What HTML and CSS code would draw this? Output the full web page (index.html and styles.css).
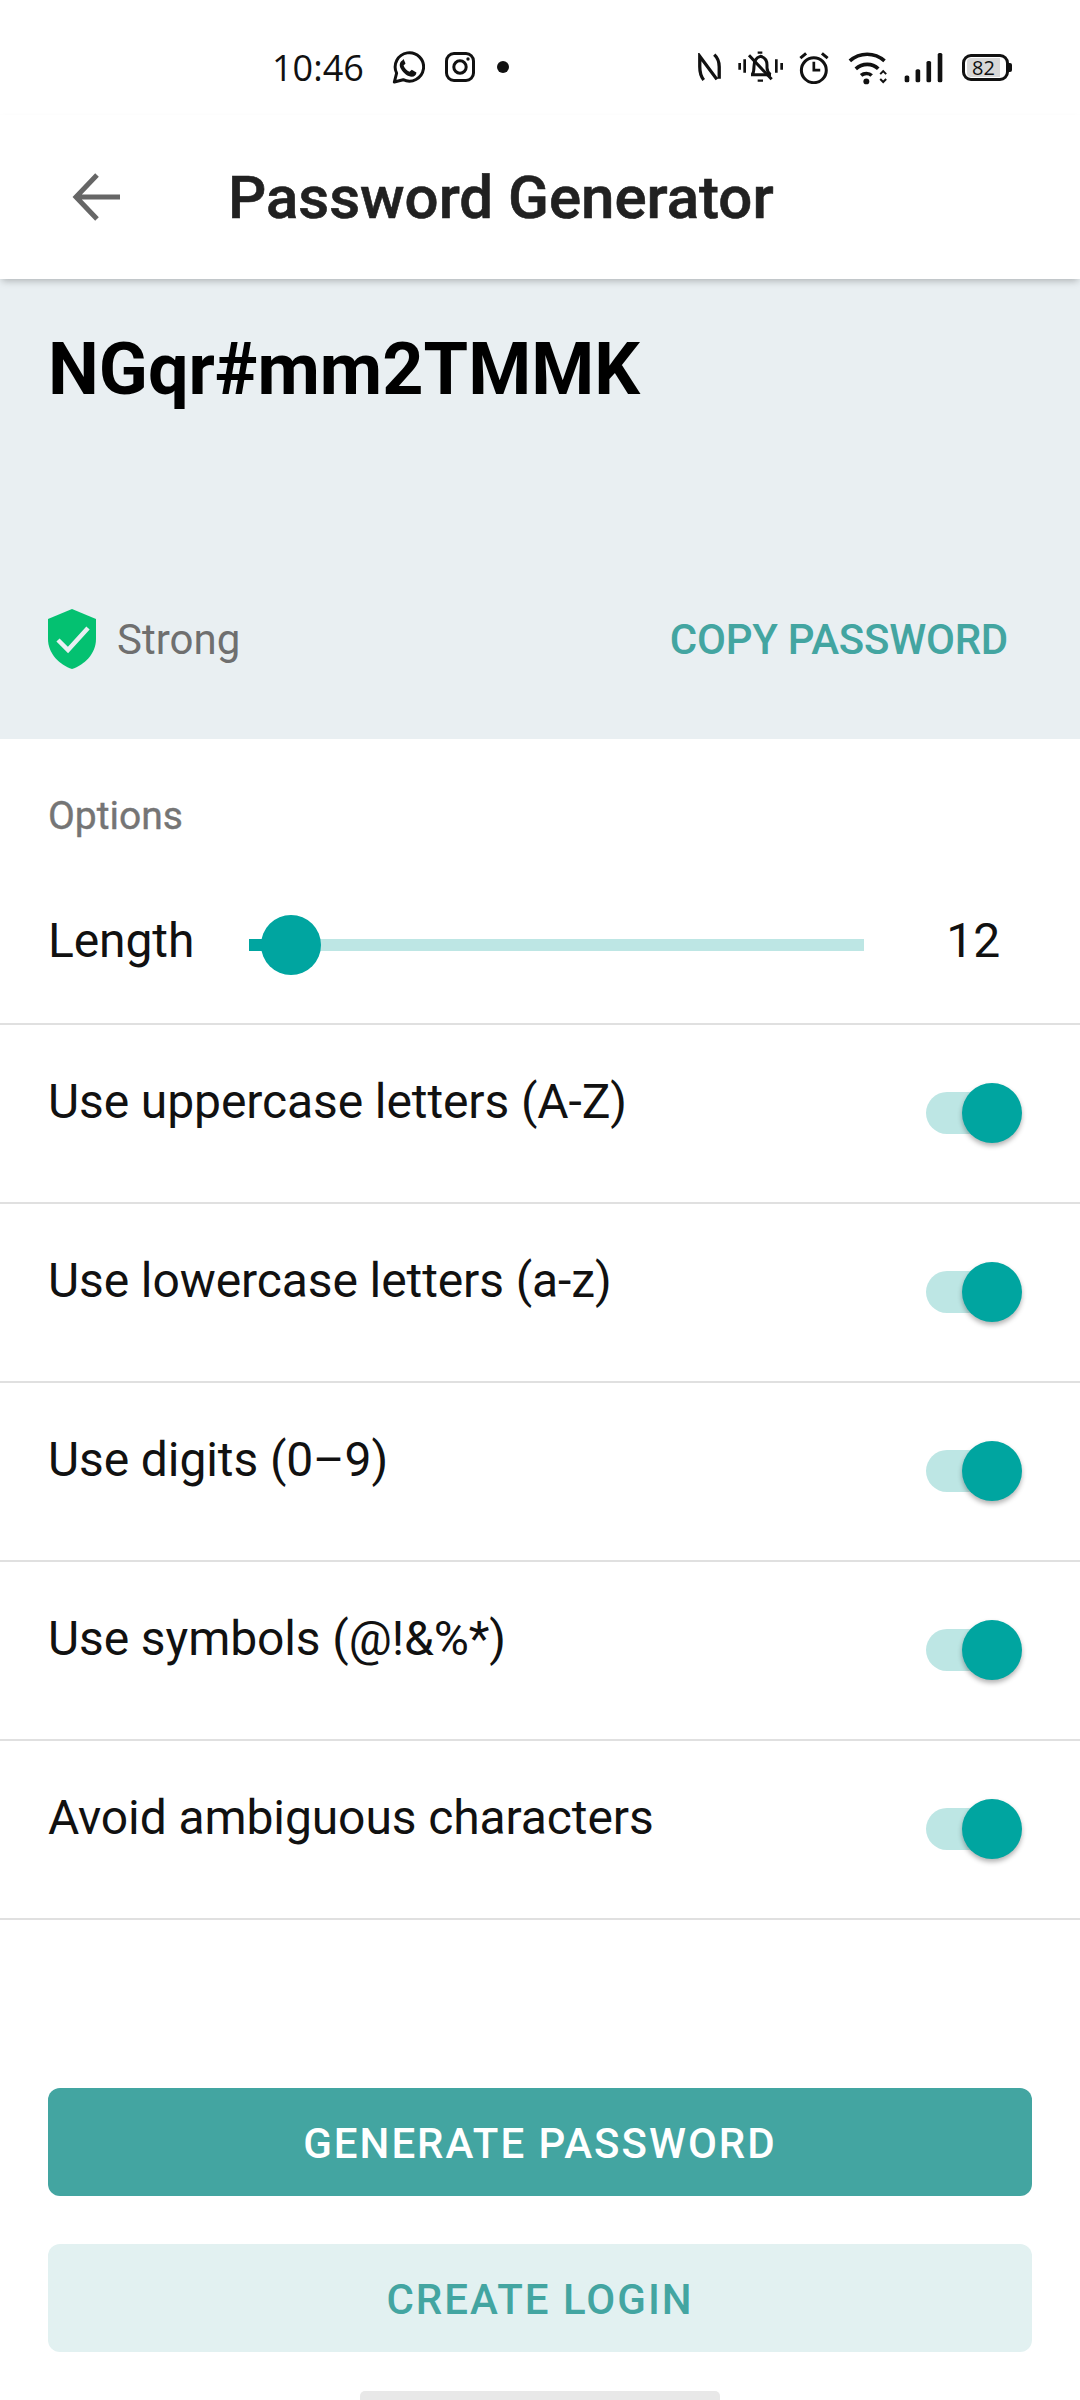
FILE: index.html
```html
<!DOCTYPE html>
<html>
    <head>
        <link rel="stylesheet" href="styles.css">
    </head>
    <body>
        <div id="status-bar">
            <span class="clock">10:46</span>
            <svg class="ic-whatsapp" width="33" height="33" viewBox="455 92 100 100" fill="none" stroke="#111" stroke-width="9">
                <path d="M462 186l7-27a43 43 0 1 1 20 20z" stroke-linejoin="round"/>
                <path d="M487 120c-9 5-11 16-5 26 8 14 21 24 33 24 8 0 14-6 14-13l-14-8-7 6c-8-3-15-11-18-19l6-6-6-14z" fill="#111" stroke="none"/>
            </svg>
            <svg class="ic-insta" width="30" height="30" viewBox="0 0 30 30" fill="none" stroke="#111" stroke-width="3">
                <rect x="1.500" y="1.500" width="27" height="27" rx="7.500"/>
                <circle cx="15" cy="15" r="6.200"/>
                <circle cx="23" cy="7" r="1.700" fill="#111" stroke="none"/>
            </svg>
            <span class="dot"></span>
            <span class="spacer"></span>
            <svg class="ic-nfc" width="24" height="29" viewBox="80 98 72 88" fill="none" stroke="#111" stroke-width="10">
                <path d="M100 180C90 168 88 155 88 140V108L140 178M147 176V140C147 125 145 115 132 103"/>
            </svg>
            <svg class="ic-bell" width="47" height="32" viewBox="198 95 141 96" fill="none" stroke="#111" stroke-width="9">
                <path d="M206 131v20M221 120v40M316 120v40M332 131v20" stroke-width="8"/>
                <path d="M240 166h60M244 166c5-8 5-14 5-25 0-15 5-26 19-30 13 3 20 12 20 26v8c0 9 4 15 10 21" stroke-linejoin="round"/>
                <path d="M234 108l68 72"/>
                <path d="M260 184h16M260 100h14" stroke-width="7"/>
            </svg>
            <svg class="ic-alarm" width="32" height="33" viewBox="385 92 95 98" fill="none" stroke="#111" stroke-width="9">
                <circle cx="432" cy="149" r="37"/>
                <path d="M432 124v25h19" stroke-width="8"/>
                <path d="M392 113l17-14M473 113l-17-14"/>
            </svg>
            <svg class="ic-wifi" width="42" height="37" viewBox="532 80 126 112" fill="none" stroke="#111" stroke-width="11">
                <path d="M540 116c30-27 75-27 105 0M558 140c20-18 50-18 68 0M574 160c9-8 24-8 32 0"/>
                <circle cx="590" cy="178" r="9" fill="#111" stroke="none"/>
                <path d="M632 156l9-9 9 9M632 171l9 9 9-9" stroke-width="6"/>
            </svg>
            <svg class="ic-signal" width="39" height="31" viewBox="700 95 118 92" fill="#111">
                <rect x="702" y="165" width="14" height="21" rx="5"/>
                <rect x="735" y="146" width="14" height="40" rx="5"/>
                <rect x="768" y="121" width="14" height="65" rx="5"/>
                <rect x="802" y="97" width="14" height="89" rx="5"/>
            </svg>
            <div class="battery"><span class="battery-fill">82</span></div>
        </div>

        <div id="toolbar">
            <svg class="back" width="48" height="48" viewBox="0 0 48 48" fill="none" stroke="#666" stroke-width="5">
                <path d="M48 24H4M25 2L4 24l21 22"/>
            </svg>
            <div class="title">Password Generator</div>
        </div>

        <div id="result">
            <div class="password">NGqr#mm2TMMK</div>
            <div class="result-foot">
                <svg class="shield" width="48" height="60" viewBox="0 0 48 60">
                    <path d="M24 0l24 10v20c0 15-12 26-24 30C12 56 0 45 0 30V10z" fill="#04c171"/>
                    <path d="M10 31l10 10 20-22" fill="none" stroke="#e9eff2" stroke-width="4.500"/>
                </svg>
                <span class="strength">Strong</span>
                <span class="copy">COPY PASSWORD</span>
            </div>
        </div>

        <div class="section-label">Options</div>

        <div class="length-row">
            <span class="row-text">Length</span>
            <div class="slider">
                <div class="slider-done"></div>
                <div class="slider-thumb"></div>
            </div>
            <span class="length-value">12</span>
        </div>

        <div class="option">
            <span class="row-text">Use uppercase letters (A-Z)</span>
            <div class="switch"><div class="switch-thumb"></div></div>
        </div>
        <div class="option">
            <span class="row-text">Use lowercase letters (a-z)</span>
            <div class="switch"><div class="switch-thumb"></div></div>
        </div>
        <div class="option">
            <span class="row-text">Use digits (0–9)</span>
            <div class="switch"><div class="switch-thumb"></div></div>
        </div>
        <div class="option">
            <span class="row-text">Use symbols (@!&amp;%*)</span>
            <div class="switch"><div class="switch-thumb"></div></div>
        </div>
        <div class="option">
            <span class="row-text">Avoid ambiguous characters</span>
            <div class="switch"><div class="switch-thumb"></div></div>
        </div>

        <div class="actions">
            <div class="btn btn-main">GENERATE PASSWORD</div>
            <div class="btn btn-soft">CREATE LOGIN</div>
        </div>
        <div class="home-bar"></div>
    </body>
</html>
```

FILE: styles.css
```css
body, html {
    margin: 0;
    padding: 0;
    height: 100%;
    background-color: white;
    font-family: 'Roboto', sans-serif;
    overflow: hidden;
}

body {
    display: flex;
    flex-direction: column;
}

#status-bar {
    display: flex;
    align-items: center;
    height: 115px;
    box-sizing: border-box;
    padding: 19px 71px 0 272px;
    color: #111;
    flex-shrink: 0;
}

.clock {
    font-family: 'Open Sans', sans-serif;
    font-size: 36px;
    width: 120px;
}

.ic-insta {
    margin-left: 20px;
}

.dot {
    width: 12px;
    height: 12px;
    border-radius: 50%;
    background: #111;
    margin-left: 22px;
}

.spacer {
    flex: 1;
}

.ic-bell {
    margin-left: 16px;
}

.ic-alarm {
    margin-left: 14px;
}

.ic-wifi {
    margin-left: 17px;
}

.ic-signal {
    margin-left: 15px;
}

.battery {
    position: relative;
    margin-left: 19px;
    width: 47px;
    height: 27px;
    border: 3px solid #111;
    border-radius: 9px;
    box-sizing: border-box;
    padding: 1px 2px;
}

.battery::after {
    content: '';
    position: absolute;
    right: -6px;
    top: 6px;
    width: 3px;
    height: 9px;
    border-radius: 0 2px 2px 0;
    background: #111;
}

.battery-fill {
    display: block;
    background: #d8d8d8;
    height: 100%;
    width: 33px;
    border-radius: 4px 0 0 4px;
    font-family: 'Open Sans', sans-serif;
    font-size: 20px;
    line-height: 20px;
    text-align: center;
}

#toolbar {
    display: flex;
    align-items: center;
    height: 164px;
    padding-left: 72px;
    background: white;
    box-shadow: 0 4px 7px -2px rgba(0,0,0,0.25);
    position: relative;
    flex-shrink: 0;
}

.title {
    font-size: 60px;
    font-weight: 500;
    color: #212121;
    margin-left: 108px;
    -webkit-text-stroke: 0.6px #212121;
}

#result {
    background-color: #e9eff2;
    height: 460px;
    box-sizing: border-box;
    padding: 49px 48px 0;
    display: flex;
    flex-direction: column;
    flex-shrink: 0;
}

.password {
    font-size: 72px;
    font-weight: 700;
    color: black;
    line-height: 84px;
}

.result-foot {
    display: flex;
    align-items: center;
    margin-top: 197px;
}

.strength {
    font-size: 42px;
    color: #6f6f6f;
    margin-left: 21px;
}

.copy {
    margin-left: auto;
    margin-right: 24px;
    font-size: 42px;
    font-weight: 500;
    letter-spacing: -0.25px;
    color: #43a5a1;
}

.section-label {
    font-size: 39px;
    color: #757575;
    padding: 55px 48px 0;
    line-height: 44px;
    -webkit-text-stroke: 0.4px #757575;
}

.row-text {
    font-size: 48px;
    color: #111;
    line-height: 56px;
    letter-spacing: -0.1px;
}

.length-row {
    display: flex;
    align-items: center;
    height: 187px;
    padding-left: 48px;
    padding-top: 28px;
    box-sizing: border-box;
    border-bottom: 2px solid #e0e0e0;
    flex-shrink: 0;
}

.length-row .row-text {
    margin-bottom: 8px;
}

.slider {
    position: relative;
    margin-left: 55px;
    width: 615px;
    height: 12px;
    background: #bde6e4;
}

.slider-done {
    width: 41px;
    height: 100%;
    background: #00a5a0;
}

.slider-thumb {
    position: absolute;
    left: 12px;
    top: -24px;
    width: 60px;
    height: 60px;
    border-radius: 50%;
    background: #00a5a0;
}

.length-value {
    font-size: 48px;
    color: #111;
    margin-left: 82px;
    margin-bottom: 8px;
}

.option {
    display: flex;
    justify-content: space-between;
    height: 179px;
    box-sizing: border-box;
    padding: 49px 58px 0 48px;
    border-bottom: 2px solid #e0e0e0;
    flex-shrink: 0;
}

.switch {
    position: relative;
    width: 84px;
    height: 42px;
    border-radius: 21px;
    background: #bde6e4;
    margin-top: 18px;
    margin-right: 12px;
}

.switch-thumb {
    position: absolute;
    right: -12px;
    top: -9px;
    width: 60px;
    height: 60px;
    border-radius: 50%;
    background: #00a5a0;
    box-shadow: 0 3px 5px rgba(0,0,0,0.3);
}

.actions {
    margin-top: 168px;
    padding: 0 48px;
    display: flex;
    flex-direction: column;
    gap: 48px;
}

.btn {
    height: 108px;
    box-sizing: border-box;
    padding-top: 2px;
    border-radius: 12px;
    display: flex;
    align-items: center;
    justify-content: center;
    font-size: 42px;
    font-weight: 500;
    letter-spacing: 2px;
}

.btn-main {
    background: #43a5a1;
    color: white;
}

.btn-soft {
    background: #e2f1f1;
    color: #43a5a1;
}

.home-bar {
    width: 360px;
    height: 9px;
    margin: 39px auto 0;
    background: #e8e8e8;
    border-radius: 5px 5px 0 0;
}
```
